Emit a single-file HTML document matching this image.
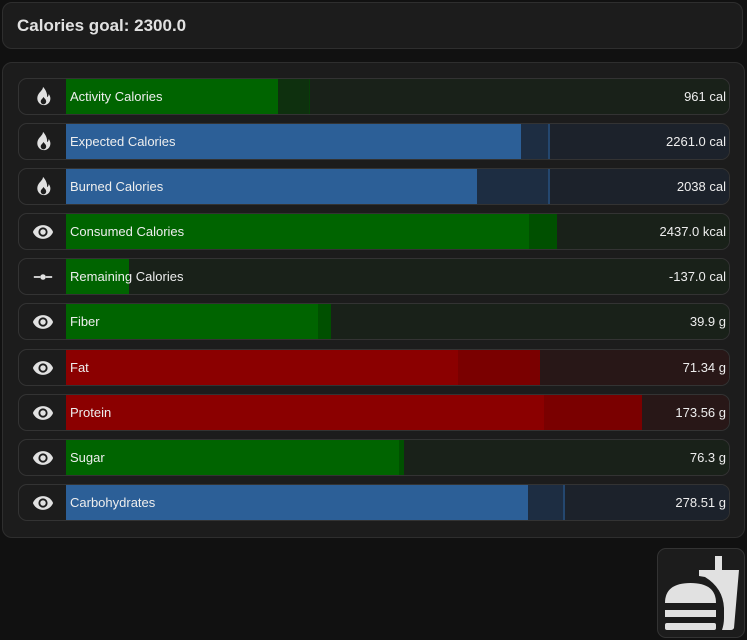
<!DOCTYPE html><html><head><style>
body{margin:0;background:#111;width:747px;height:640px;overflow:hidden;font-family:"Liberation Sans",sans-serif;color:#e1e1e1;position:relative}
.card{position:absolute;left:2px;width:741px;background:#1c1c1c;border:1px solid #2e2e2e;border-radius:10px}
.h{top:2px;height:47px;font-weight:bold;font-size:17px;line-height:46px;padding-left:14px;box-sizing:border-box}
.row{position:absolute;left:18px;width:712px;height:37px;border:1px solid #333;border-radius:9px;box-sizing:border-box;overflow:hidden;background:#1c1c1c}
.ic{position:absolute;left:0;top:0;width:47px;height:35px;display:flex;align-items:center;justify-content:center}
.bg{position:absolute;left:47px;right:0;top:0;bottom:0}
.s{position:absolute;top:0;bottom:0}
.lab{position:absolute;left:51px;top:0;line-height:35px;font-size:13px;color:#eee}
.val{position:absolute;right:3px;top:0;line-height:35px;font-size:13px;color:#eee}
.btn{position:absolute;left:657px;top:548px;width:88px;height:90px;background:#1c1c1c;border:1px solid #333;border-radius:9px;box-sizing:border-box;overflow:hidden}
</style></head><body>
<div class="card h">Calories goal: 2300.0</div>
<div class="card" style="top:62px;height:474px"></div>
<svg width="0" height="0" style="position:absolute"><defs>
<symbol id="fire" viewBox="0 0 24 24"><path fill="#e1e1e1" d="M12 1c0 3.5-4 5.5-5.5 9-1.3 3-.8 6.5 1.5 8.8 2 2 5 2.6 7.5 1.6 3-1.2 5-4.2 4.5-7.7-.3-2.3-1.8-4-1.8-4 0 1.6-.6 2.8-1.8 3.4C17 9 15 4 12 1zM12.5 12c1.2 1.7 3 2.8 3 5a3 3 0 01-6 0c0-2.2 2-3 3-5z"/></symbol>
<symbol id="eye" viewBox="0 0 24 24"><path fill="#e1e1e1" d="M12 4.5C7 4.5 2.7 7.6 1 12c1.7 4.4 6 7.5 11 7.5s9.3-3.1 11-7.5c-1.7-4.4-6-7.5-11-7.5zM12 17a5 5 0 110-10 5 5 0 010 10zm0-8a3 3 0 100 6 3 3 0 000-6z"/></symbol>
<symbol id="dot" viewBox="0 0 24 24"><path fill="#e1e1e1" d="M2 11h7v2H2zM15 11h7v2h-7z"/><circle cx="12" cy="12" r="3" fill="#e1e1e1"/></symbol>
</defs></svg>

<div class="row" style="top:78px"><div class="ic"><svg width="22" height="22"><use href="#fire"/></svg></div><div class="bg" style="background:#192119"></div><div class="s" style="left:47px;width:212px;background:#006400"></div><div class="s" style="left:259px;width:32px;background:#0e300e"></div><div class="s" style="left:290px;width:1px;background:#063f06"></div><div class="lab">Activity Calories</div><div class="val">961 cal</div></div>

<div class="row" style="top:123px"><div class="ic"><svg width="22" height="22"><use href="#fire"/></svg></div><div class="bg" style="background:#1c222b"></div><div class="s" style="left:47px;width:455px;background:#2c5f97"></div><div class="s" style="left:502px;width:28px;background:#1d2d42"></div><div class="s" style="left:529px;width:2px;background:#24476f"></div><div class="lab">Expected Calories</div><div class="val">2261.0 cal</div></div>

<div class="row" style="top:168px"><div class="ic"><svg width="22" height="22"><use href="#fire"/></svg></div><div class="bg" style="background:#1c222b"></div><div class="s" style="left:47px;width:411px;background:#2c5f97"></div><div class="s" style="left:458px;width:72px;background:#1d2d42"></div><div class="s" style="left:529px;width:2px;background:#24476f"></div><div class="lab">Burned Calories</div><div class="val">2038 cal</div></div>

<div class="row" style="top:213px"><div class="ic"><svg width="22" height="22"><use href="#eye"/></svg></div><div class="bg" style="background:#192119"></div><div class="s" style="left:47px;width:463px;background:#006400"></div><div class="s" style="left:510px;width:28px;background:#005000"></div><div class="lab">Consumed Calories</div><div class="val">2437.0 kcal</div></div>

<div class="row" style="top:258px"><div class="ic"><svg width="22" height="22"><use href="#dot"/></svg></div><div class="bg" style="background:#192119"></div><div class="s" style="left:47px;width:63px;background:#006400"></div><div class="lab">Remaining Calories</div><div class="val">-137.0 cal</div></div>

<div class="row" style="top:303px"><div class="ic"><svg width="22" height="22"><use href="#eye"/></svg></div><div class="bg" style="background:#192119"></div><div class="s" style="left:47px;width:252px;background:#006400"></div><div class="s" style="left:299px;width:13px;background:#005000"></div><div class="lab">Fiber</div><div class="val">39.9 g</div></div>

<div class="row" style="top:349px"><div class="ic"><svg width="22" height="22"><use href="#eye"/></svg></div><div class="bg" style="background:#281717"></div><div class="s" style="left:47px;width:392px;background:#8b0000"></div><div class="s" style="left:439px;width:82px;background:#7a0000"></div><div class="lab">Fat</div><div class="val">71.34 g</div></div>

<div class="row" style="top:394px"><div class="ic"><svg width="22" height="22"><use href="#eye"/></svg></div><div class="bg" style="background:#281717"></div><div class="s" style="left:47px;width:478px;background:#8b0000"></div><div class="s" style="left:525px;width:98px;background:#7a0000"></div><div class="lab">Protein</div><div class="val">173.56 g</div></div>

<div class="row" style="top:439px"><div class="ic"><svg width="22" height="22"><use href="#eye"/></svg></div><div class="bg" style="background:#192119"></div><div class="s" style="left:47px;width:333px;background:#006400"></div><div class="s" style="left:380px;width:5px;background:#005000"></div><div class="lab">Sugar</div><div class="val">76.3 g</div></div>

<div class="row" style="top:484px"><div class="ic"><svg width="22" height="22"><use href="#eye"/></svg></div><div class="bg" style="background:#1c222b"></div><div class="s" style="left:47px;width:462px;background:#2c5f97"></div><div class="s" style="left:509px;width:36px;background:#1d2d42"></div><div class="s" style="left:544px;width:2px;background:#24476f"></div><div class="lab">Carbohydrates</div><div class="val">278.51 g</div></div>

<div class="btn"><svg width="88" height="90" viewBox="0 0 88 90" style="position:absolute;left:-1px;top:-1px">
<g fill="#e1e1e1">
<rect x="58" y="8" width="7" height="14"/>
<path d="M42 22 L82 22 L77 80 Q76 82 74 82 L65 82 Q67 76 67 70 L67 60 Q66 40 48 29 L42 28 Z"/>
<path d="M8 55 Q8 35 33.5 35 Q59 35 59 55 Z"/>
<rect x="8" y="62" width="51" height="7"/>
<rect x="8" y="75" width="51" height="7" rx="2"/>
</g></svg></div>
</body></html>
